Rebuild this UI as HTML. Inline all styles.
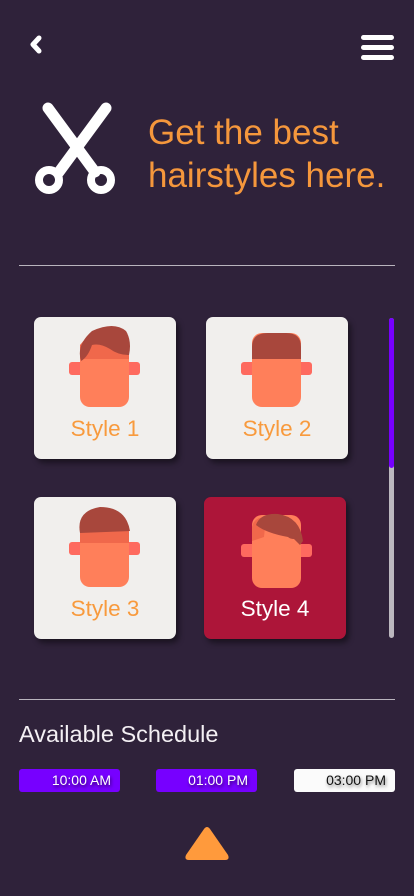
<!DOCTYPE html>
<html><head><style>
body{margin:0;width:414px;height:896px;background:#2f223a;position:relative;overflow:hidden;font-family:"Liberation Sans",sans-serif}
.a{position:absolute}
.card{position:absolute;width:142px;height:142px;background:#f1efed;border-radius:7px;box-shadow:3px 4px 6px rgba(0,0,0,.45)}
.card .t{position:absolute;left:0;right:0;top:99px;text-align:center;font-size:22.5px;color:#f89a3d}
.line{position:absolute;left:19px;width:376px;height:1px;background:#b9b4bd}
.btn{position:absolute;top:769px;width:101px;height:23px;border-radius:3px;background:#7700ff;color:#fff;font-size:14px;line-height:23px;text-align:right;box-sizing:border-box;padding-right:9px;text-shadow:1px 2px 3px rgba(0,0,0,.6)}
</style></head><body>
<svg class="a" style="left:0;top:0" width="414" height="210">
<path d="M39 38 L33 44.5 L39 51" stroke="#fff" stroke-width="5" fill="none" stroke-linecap="round" stroke-linejoin="round"/>
<path d="M48 108 L95 172" stroke="#fff" stroke-width="11" stroke-linecap="round"/>
<path d="M106 108 L59 172" stroke="#fff" stroke-width="11" stroke-linecap="round"/>
<circle cx="49" cy="180" r="10" stroke="#fff" stroke-width="8" fill="none"/>
<circle cx="101" cy="180" r="10" stroke="#fff" stroke-width="8" fill="none"/>
</svg>
<div class="a" style="left:361px;top:35px;width:33px;height:5px;background:#fff;border-radius:3px"></div>
<div class="a" style="left:361px;top:45px;width:33px;height:5px;background:#fff;border-radius:3px"></div>
<div class="a" style="left:361px;top:55px;width:33px;height:5px;background:#fff;border-radius:3px"></div>
<div class="a" style="left:148px;top:111px;font-size:35px;line-height:43px;color:#f5973c">Get the best<br>hairstyles here.</div>
<div class="line" style="top:265px"></div>

<div class="card" style="left:34px;top:317px">
<svg width="142" height="100"><rect x="35" y="45" width="71" height="13" rx="3" fill="#fe6a5f"/><rect x="46" y="26" width="49" height="64" rx="10" fill="#ff7f5a"/><path d="M46 50 V28 Q60 10 80 10 Q96 14 95 38 L95 42 L46 42Z" fill="#f0684b"/><path d="M47 44 Q42 28 58 14 Q80 4 92 14 Q98 24 95 38 Q84 38 76 32 Q66 26 58 28 Q54 40 47 44Z" fill="#a8473c"/></svg>
<div class="t">Style 1</div></div>
<div class="card" style="left:206px;top:317px">
<svg width="142" height="100"><rect x="35" y="45" width="71" height="13" rx="3" fill="#fe6a5f"/><rect x="46" y="16" width="49" height="74" rx="10" fill="#ff7f5a"/><path d="M46 42 V30 Q46 16 62 16 H80 Q95 16 95 30 V42Z" fill="#a8473c"/></svg>
<div class="t">Style 2</div></div>
<div class="card" style="left:34px;top:497px">
<svg width="142" height="100"><rect x="35" y="45" width="71" height="13" rx="3" fill="#fe6a5f"/><rect x="46" y="26" width="49" height="64" rx="10" fill="#ff7f5a"/><rect x="46" y="34" width="49" height="12" fill="#f0684b"/><path d="M46 36 Q42 14 66 10 Q92 10 96 34 Z" fill="#a8473c"/></svg>
<div class="t">Style 3</div></div>
<div class="card" style="left:204px;top:497px;background:#ad1539">
<svg width="142" height="100"><rect x="37" y="47" width="71" height="13" rx="3" fill="#fe6a5f"/><rect x="48" y="18" width="49" height="73" rx="10" fill="#ff7f5a"/><path d="M48 30 Q50 20 62 20 L60 40 L48 44Z" fill="#f0684b"/><path d="M52 28 Q56 16 74 17 Q96 20 99 44 L96 48 L90 42 Q86 42 84 40 Q62 36 52 28Z" fill="#a8473c"/></svg>
<div class="t" style="color:#fff">Style 4</div></div>

<div class="a" style="left:389px;top:318px;width:5px;height:320px;background:#bcb8bf;border-radius:3px"></div>
<div class="a" style="left:389px;top:318px;width:5px;height:150px;background:#7700ff;border-radius:3px"></div>

<div class="line" style="top:699px"></div>
<div class="a" style="left:19px;top:721px;font-size:23.5px;color:#f4f0f4">Available Schedule</div>
<div class="btn" style="left:19px">10:00 AM</div>
<div class="btn" style="left:156px">01:00 PM</div>
<div class="btn" style="left:294px;background:#fbfbfb;color:#111;text-shadow:1px 2px 3px rgba(0,0,0,.5)">03:00 PM</div>
<svg class="a" style="left:184px;top:826px" width="46" height="36"><path d="M20 3 Q23 -1 26 3 L44 29 Q46 34 41 34 H5 Q0 34 2 29Z" fill="#ff9a3c"/></svg>
</body></html>
